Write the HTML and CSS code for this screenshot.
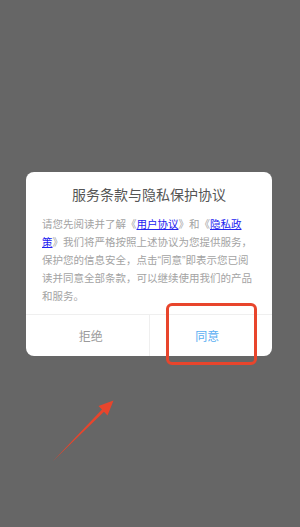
FILE: index.html
```html
<!DOCTYPE html>
<html lang="zh-CN">
<head>
    <meta charset="UTF-8">
    <meta name="viewport" content="width=device-width, initial-scale=1.0">
    <title>服务条款与隐私保护协议</title>
    <link rel="stylesheet" href="styles.css">
</head>
<body>
    <div class="screen">
        <div class="dialog">
            <div class="dialog-title">服务条款与隐私保护协议</div>
            <div class="dialog-body">请您先阅读并了解《<a href="#">用户协议</a>》和《<a href="#">隐私政策</a>》我们将严格按照上述协议为您提供服务，保护您的信息安全，点击“同意”即表示您已阅读并同意全部条款，可以继续使用我们的产品和服务。</div>
            <div class="dialog-actions">
                <button class="btn btn-reject">拒绝</button>
                <button class="btn btn-agree">同意</button>
            </div>
        </div>

        <!-- annotation overlay -->
        <div class="highlight"></div>
        <svg class="arrow" width="300" height="527" viewBox="0 0 300 527">
            <polygon fill="#e8452c" points="53,461 102,409.5 98.5,406 113.5,400.5 107.5,415.5 104,411.8"/>
        </svg>
    </div>
</body>
</html>
```

FILE: styles.css
```css
html, body {
    margin: 0;
    padding: 0;
}
body {
    font-family: "Noto Sans CJK SC", "Noto Sans", sans-serif;
    background-color: #666666;
}
.screen {
    position: relative;
    width: 300px;
    height: 527px;
    display: flex;
    align-items: center;
    justify-content: center;
    overflow: hidden;
}
.dialog {
    width: 246px;
    margin-right: 2px;
    background: #ffffff;
    border-radius: 8px;
    overflow: hidden;
}
.dialog-title {
    padding-top: 12px;
    font-size: 14px;
    line-height: 20px;
    color: #555555;
    text-align: center;
}
.dialog-body {
    padding: 11px 15px 9px 16px;
    font-family: "Liberation Sans", "Noto Sans CJK SC", sans-serif;
    font-size: 10.5px;
    line-height: 18px;
    color: #a3a3a3;
    word-break: break-all;
}
.dialog-body a {
    color: #2323f0;
    text-decoration: underline;
}
.dialog-actions {
    display: flex;
    border-top: 1px solid #efefef;
    height: 41px;
}
.btn {
    flex: 1;
    border: none;
    background: transparent;
    font-family: inherit;
    font-size: 12px;
    padding: 0;
    cursor: pointer;
}
.btn-reject {
    color: #9a9a9a;
    border-right: 1px solid #efefef;
    padding-left: 7px;
}
.btn-agree {
    color: #58aef2;
    padding-right: 7px;
}
.highlight {
    position: absolute;
    left: 166px;
    top: 303px;
    width: 85px;
    height: 56px;
    border: 3px solid #e8452c;
    border-radius: 6px;
}
.arrow {
    position: absolute;
    left: 0;
    top: 0;
}
```
